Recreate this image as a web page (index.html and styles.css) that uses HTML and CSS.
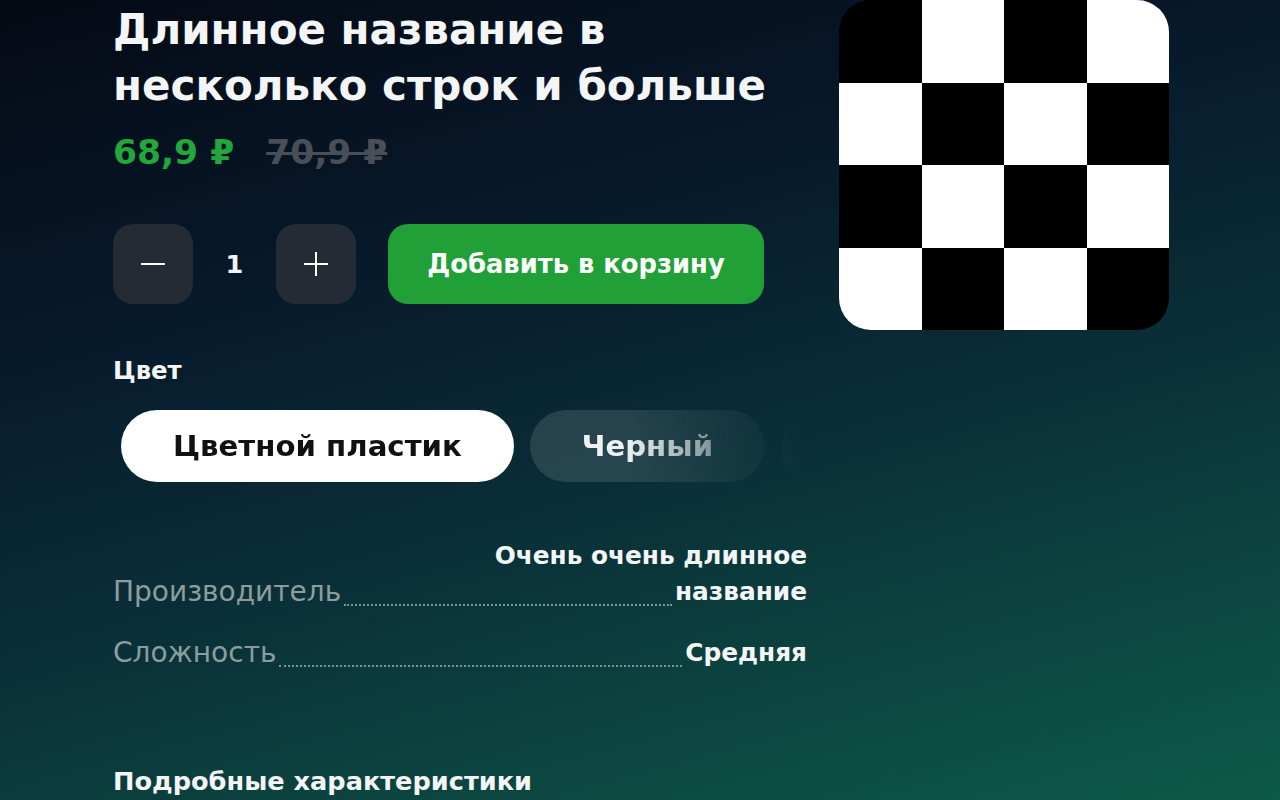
FILE: index.html
```html
<!DOCTYPE html>
<html lang="ru">
<head>
<meta charset="utf-8">
<title>Товар</title>
<link rel="stylesheet" href="styles.css">
</head>
<body>
<main class="page">
  <section class="info">
    <h1 class="title">Длинное название в несколько строк и больше</h1>
    <div class="prices">
      <span class="price">68,9 ₽</span>
      <span class="price-old">70,9 ₽</span>
    </div>
    <div class="actions">
      <div class="counter">
        <button class="step" aria-label="Уменьшить">
          <svg width="24" height="24" viewBox="0 0 24 24"><path d="M0 12H24" stroke="#fff" stroke-width="2" fill="none"/></svg>
        </button>
        <span class="qty">1</span>
        <button class="step" aria-label="Увеличить">
          <svg width="24" height="24" viewBox="0 0 24 24"><path d="M0 12H24M12 0V24" stroke="#fff" stroke-width="2" fill="none"/></svg>
        </button>
      </div>
      <button class="cart">Добавить в корзину</button>
    </div>
    <div class="option">
      <div class="option-label">Цвет</div>
      <div class="chips">
        <button class="chip chip-active">Цветной пластик</button>
        <button class="chip">Черный</button>
        <button class="chip">Белый</button>
      </div>
    </div>
    <div class="specs">
      <div class="spec">
        <span class="spec-value spec-value-lead">Очень очень длинное</span>
        <span class="spec-name">Производитель</span>
        <span class="leader"></span>
        <span class="spec-value">название</span>
      </div>
      <div class="spec">
        <span class="spec-name">Сложность</span>
        <span class="leader"></span>
        <span class="spec-value">Средняя</span>
      </div>
    </div>
    <h2 class="more">Подробные характеристики</h2>
  </section>
  <aside class="media">
    <div class="checker">
      <span class="cell b"></span><span class="cell w"></span><span class="cell b"></span><span class="cell w"></span>
      <span class="cell w"></span><span class="cell b"></span><span class="cell w"></span><span class="cell b"></span>
      <span class="cell b"></span><span class="cell w"></span><span class="cell b"></span><span class="cell w"></span>
      <span class="cell w"></span><span class="cell b"></span><span class="cell w"></span><span class="cell b"></span>
    </div>
  </aside>
</main>
</body>
</html>
```
FILE: styles.css
```css
* { box-sizing: border-box; }
html, body { margin: 0; height: 100%; }
body {
  font-family: "DejaVu Sans", "Noto Sans", sans-serif;
  color: #f4f5f6;
  background: linear-gradient(165deg, #050a14 0%, #07182a 30%, #0a2f38 58%, #0d5a48 100%);
  min-height: 800px;
  overflow: hidden;
  padding-left: 2px;
}
.page {
  width: 1056px;
  margin: 0 auto;
  display: grid;
  grid-template-columns: 694px 330px;
  column-gap: 32px;
  align-items: start;
}
.info {
  display: flex;
  flex-direction: column;
  padding-top: 2px;
}
.title {
  margin: 0;
  font-size: 42px;
  line-height: 56px;
  font-weight: 700;
  color: #f4f5f6;
}
.prices {
  display: flex;
  gap: 32px;
  margin-top: 18px;
  font-size: 34.5px;
  line-height: 40px;
  font-weight: 700;
}
.price { color: #21a73b; }
.price-old {
  color: #4a4f57;
  text-decoration: line-through;
  text-decoration-thickness: 3px;
}
.actions {
  display: flex;
  gap: 32px;
  margin-top: 52px;
}
.counter {
  display: flex;
  align-items: center;
}
.step {
  width: 80px;
  height: 80px;
  border: 0;
  border-radius: 20px;
  background: #252b35;
  display: flex;
  align-items: center;
  justify-content: center;
  padding: 0;
}
.qty {
  width: 83px;
  text-align: center;
  font-size: 25.6px;
  font-weight: 700;
}
.cart {
  height: 80px;
  width: 376px;
  border: 0;
  border-radius: 20px;
  background: #21a038;
  color: #fff;
  font-family: inherit;
  font-size: 25.8px;
  font-weight: 700;
}
.option { margin-top: 51px; }
.option-label {
  font-size: 24.4px;
  line-height: 32px;
  font-weight: 700;
}
.chips {
  display: flex;
  gap: 16px;
  padding: 8px;
  margin-top: 15px;
  overflow: hidden;
  -webkit-mask-image: linear-gradient(to right, #000 74%, transparent 100%);
  mask-image: linear-gradient(to right, #000 74%, transparent 100%);
}
.chip {
  flex: none;
  height: 72px;
  padding: 0 52px;
  border: 0;
  border-radius: 36px;
  background: rgba(255, 255, 255, 0.12);
  color: #eef2f3;
  font-family: inherit;
  font-size: 29.2px;
  font-weight: 700;
}
.chip-active {
  background: #fff;
  color: #111;
}
.specs {
  margin-top: 48px;
  display: flex;
  flex-direction: column;
  gap: 25px;
}
.spec {
  display: grid;
  grid-template-columns: auto 1fr auto;
  align-items: end;
}
.spec-name {
  font-size: 28px;
  line-height: 36px;
  color: #8c9d9e;
}
.leader {
  border-bottom: 2px dotted rgba(170, 190, 190, 0.7);
  margin: 0 3px 4px;
}
.spec-value {
  text-align: right;
  font-size: 24.8px;
  line-height: 36px;
  font-weight: 700;
  color: #f4f6f6;
}
.spec-value-lead {
  grid-column: 1 / -1;
  justify-self: end;
}
.more {
  margin: 94px 0 0;
  font-size: 25.6px;
  line-height: 32px;
  font-weight: 700;
}
.checker {
  width: 330px;
  height: 330px;
  border-radius: 32px;
  overflow: hidden;
  display: grid;
  grid-template-columns: repeat(4, 1fr);
  grid-template-rows: repeat(4, 1fr);
}
.cell.b { background: #000; }
.cell.w { background: #fff; }
```
